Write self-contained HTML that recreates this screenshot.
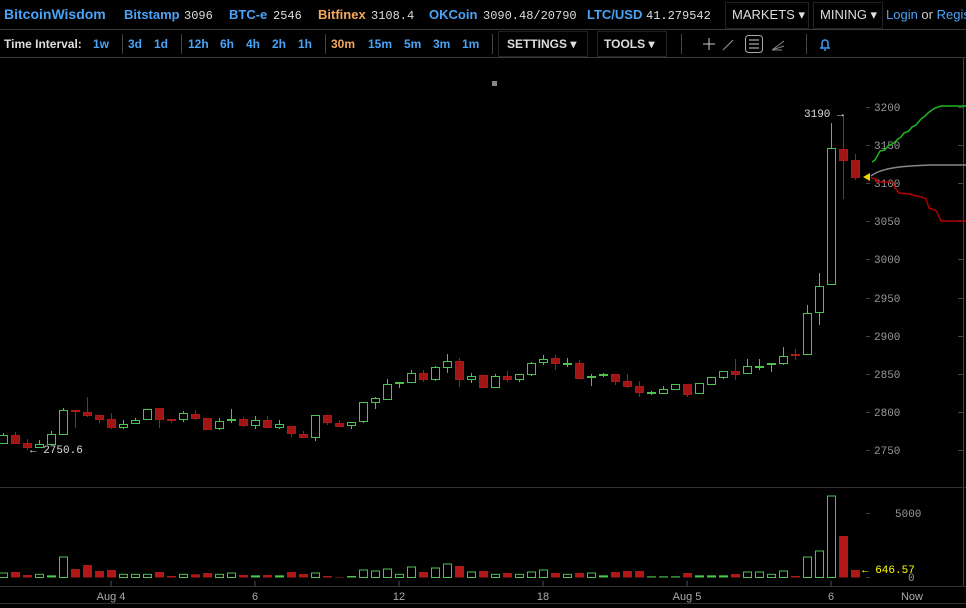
<!DOCTYPE html>
<html><head><meta charset="utf-8"><style>
*{margin:0;padding:0;box-sizing:border-box}
body{width:966px;height:608px;background:#000;overflow:hidden;position:relative;font-family:"Liberation Sans",Arial,sans-serif}
.t{position:absolute;white-space:nowrap;font-size:13px;line-height:16px}
.b{color:#4aa3f5}
.m{font-family:"Liberation Mono",monospace;color:#ddd;font-size:12px}
.w{color:#ddd}
.bd{font-weight:bold}
.o{color:#f5a85a}
.sep{position:absolute;width:1px;height:20px;background:#444;top:34px}
.box{position:absolute;border:1px solid #222;top:2px;height:27px}
</style></head><body>
<div style="position:absolute;left:0;top:29px;width:966px;height:1px;background:#3a3a3a"></div>
<div style="position:absolute;left:0;top:57px;width:966px;height:1px;background:#3a3a3a"></div>
<div class="box" style="left:725px;width:84px"></div>
<div class="box" style="left:813px;width:70px"></div>
<div class="t b bd" style="left:4px;top:6px;font-size:14px">BitcoinWisdom</div>
<div class="t b bd" style="left:124px;top:7px">Bitstamp</div><div class="t m" style="left:184px;top:8px">3096</div>
<div class="t b bd" style="left:229px;top:7px">BTC-e</div><div class="t m" style="left:273px;top:8px">2546</div>
<div class="t o bd" style="left:318px;top:7px">Bitfinex</div><div class="t m" style="left:371px;top:8px">3108.4</div>
<div class="t b bd" style="left:429px;top:7px">OKCoin</div><div class="t m" style="left:483px;top:8px">3090.48/20790</div>
<div class="t b bd" style="left:587px;top:7px">LTC/USD</div><div class="t m" style="left:646px;top:8px">41.279542</div>
<div class="t w" style="left:732px;top:7px">MARKETS ▾</div>
<div class="t w" style="left:820px;top:7px">MINING ▾</div>
<div class="t b" style="left:886px;top:7px">Login <span style="color:#ccc">or</span> Register</div>

<div class="t w bd" style="left:4px;top:36px;font-size:12px">Time Interval:</div>
<div class="t b bd" style="left:93px;top:36px;font-size:12px">1w</div>
<div class="sep" style="left:122px"></div>
<div class="t b bd" style="left:128px;top:36px;font-size:12px">3d</div>
<div class="t b bd" style="left:154px;top:36px;font-size:12px">1d</div>
<div class="sep" style="left:181px"></div>
<div class="t b bd" style="left:188px;top:36px;font-size:12px">12h</div>
<div class="t b bd" style="left:220px;top:36px;font-size:12px">6h</div>
<div class="t b bd" style="left:246px;top:36px;font-size:12px">4h</div>
<div class="t b bd" style="left:272px;top:36px;font-size:12px">2h</div>
<div class="t b bd" style="left:298px;top:36px;font-size:12px">1h</div>
<div class="sep" style="left:325px"></div>
<div class="t o bd" style="left:331px;top:36px;font-size:12px">30m</div>
<div class="t b bd" style="left:368px;top:36px;font-size:12px">15m</div>
<div class="t b bd" style="left:404px;top:36px;font-size:12px">5m</div>
<div class="t b bd" style="left:433px;top:36px;font-size:12px">3m</div>
<div class="t b bd" style="left:462px;top:36px;font-size:12px">1m</div>
<div class="sep" style="left:492px"></div>
<div class="box" style="left:498px;top:31px;width:90px;height:26px"></div>
<div class="box" style="left:597px;top:31px;width:70px;height:26px"></div>
<div class="t w bd" style="left:507px;top:36px;font-size:12px">SETTINGS ▾</div>
<div class="t w bd" style="left:604px;top:36px;font-size:12px">TOOLS ▾</div>
<div class="sep" style="left:681px"></div>
<div class="sep" style="left:806px"></div>
<svg style="position:absolute;left:0;top:0" width="966" height="608">
<g stroke="#ccc" stroke-width="1" fill="none">
<path d="M703 44h12M709 38v12"/>
<path d="M723 50l10-10" stroke="#999"/>
<rect x="745.5" y="35.5" width="17" height="17" rx="3" stroke="#aaa"/>
<path d="M749 40h10M749 44h10M749 48h10"/>
<path d="M772 50l12-9M772 50l12-4M772 50l10 0" stroke="#888"/>
</g>
<path d="M820 48h10M822 48v-5a3 3 0 0 1 6 0v5M824 50h2" stroke="#3d9bff" stroke-width="1.5" fill="none"/>
<rect x="492" y="81" width="5" height="5" fill="#888"/>
<line x1="963.5" y1="58" x2="963.5" y2="586" stroke="#444"/>
<line x1="0" y1="487.5" x2="966" y2="487.5" stroke="#333"/>
<line x1="0" y1="586.5" x2="966" y2="586.5" stroke="#333"/>
<line x1="0" y1="603.5" x2="966" y2="603.5" stroke="#333"/>
<g id="ax" font-family="Liberation Mono,monospace" font-size="11" fill="#999"></g>
<g id="cd"></g>
<path d="M872 162L875 160L880 151L885 150L888 146L892 144L895 142L898 139L901 137L904 133L909 131L912 127L916 125L921 119L925 116L928 113L932 110L935 108L941 106H966" stroke="#1db81d" stroke-width="1.5" fill="none"/>
<path d="M871 176c10-8 30-10 60-11h35" stroke="#888" stroke-width="1.5" fill="none"/>
<path d="M871 178L876 179L877 182L893 182L895 188L899 193L910 194L912 195L922 197L926 199L929 208L935 210L937 212L939 217L941 221H966" stroke="#b00000" stroke-width="1.5" fill="none"/>
<path d="M863 177l7-4v8z" fill="#e5d800"/>
<text x="804" y="117" font-family="Liberation Mono,monospace" font-size="11" fill="#ddd">3190 →</text>
<text x="30" y="453" font-family="Liberation Mono,monospace" font-size="11" fill="#ddd">← 2750.6</text>
<text x="862" y="573" font-family="Liberation Mono,monospace" font-size="11" fill="#ff0">← 646.57</text>
<g font-family="Liberation Sans,sans-serif" font-size="11" fill="#aaa" text-anchor="middle">
<text x="111" y="600">Aug 4</text><text x="255" y="600">6</text><text x="399" y="600">12</text><text x="543" y="600">18</text><text x="687" y="600">Aug 5</text><text x="831" y="600">6</text><text x="912" y="600">Now</text>
</g>
<g stroke="#555"><path d="M111 581v5M255 581v5M399 581v5M543 581v5M687 581v5M831 581v5"/></g>
</svg>
<script>
var NS="http://www.w3.org/2000/svg";
function el(p,n,a){var e=document.createElementNS(NS,n);for(var k in a)e.setAttribute(k,a[k]);p.appendChild(e);return e;}
var ax=document.getElementById('ax');
var labs=[[3200,107],[3150,145],[3100,183],[3050,221],[3000,259],[2950,298],[2900,336],[2850,374],[2800,412],[2750,450]];
labs.forEach(function(l){var t=el(ax,'text',{x:874,y:l[1]+4});t.textContent=l[0];el(ax,'line',{x1:866,x2:870,y1:l[1]+.5,y2:l[1]+.5,stroke:'#444'});el(ax,'line',{x1:958,x2:963,y1:l[1]+.5,y2:l[1]+.5,stroke:'#444'});});
var t=el(ax,'text',{x:895,y:517});t.textContent='5000';t=el(ax,'text',{x:908,y:581});t.textContent='0';
el(ax,'line',{x1:866,x2:870,y1:513.5,y2:513.5,stroke:'#444'});el(ax,'line',{x1:866,x2:870,y1:577.5,y2:577.5,stroke:'#444'});
var C=[['g',435,443,433,444],['r',435,443,432,444],['r',443,447,439,450],['g',444,447,440,448],['g',434,444,431,445],['g',410,434,408,435],['r',410,412,410,428],['r',412,415,397,417],['r',415,419,415,423],['r',419,427,413,429],['g',424,427,420,429],['g',420,423,418,423],['g',409,419,409,419],['r',408,419,408,428],['r',419,420,419,423],['g',413,419,411,422],['r',414,418,410,420],['r',418,429,418,429],['g',421,428,418,430],['g',419,421,409,423],['r',419,425,417,427],['g',420,425,416,429],['r',420,427,416,427],['g',424,427,420,429],['r',426,433,426,437],['r',434,437,431,437],['g',415,437,415,441],['r',415,422,415,425],['r',423,426,420,427],['g',422,425,422,429],['g',402,421,402,423],['g',398,402,397,409],['g',384,399,379,399],['g',382,384,382,388],['g',373,382,370,383],['r',373,379,370,382],['g',367,379,366,381],['g',361,367,354,373],['r',361,379,358,387],['g',376,379,373,383],['r',375,387,375,388],['g',376,387,374,387],['r',376,379,371,382],['g',374,379,374,382],['g',363,374,362,376],['g',359,362,355,365],['r',358,363,355,370],['g',363,365,358,367],['r',363,378,360,378],['g',376,377,374,386],['g',374,375,373,377],['r',374,381,374,385],['r',381,386,374,388],['r',386,392,381,397],['g',392,393,391,395],['g',389,393,386,393],['g',384,389,384,390],['r',384,394,384,397],['g',383,393,383,394],['g',377,384,377,385],['g',371,377,371,379],['r',371,374,359,380],['g',366,373,359,373],['g',366,367,359,370],['g',363,364,363,372],['g',356,363,347,365],['r',354,355,349,360],['g',313,354,305,355],['g',286,312,273,325],['g',148,284,123,285],['r',149,160,114,199],['r',160,177,154,180]];
var cd=document.getElementById('cd');
C.forEach(function(c,i){var x=3+12*i,col=c[0]=='g'?'#4cc34c':'#b01818',fill=c[0]=='g'?'none':'#a01414';
el(cd,'line',{x1:x+.5,x2:x+.5,y1:c[3],y2:c[4],stroke:col});
var h=c[2]-c[1];
if(h<=2)el(cd,'rect',{x:x-4,y:c[1],width:9,height:2,fill:col});
else el(cd,'rect',{x:x-3.5,y:c[1]+.5,width:8,height:h,fill:c[0]=='g'?'#000':fill,stroke:col});});
var V=['g279','r276','r285','g283','g286','g231','r267','r255','r273','r270','g283','g283','g283','r276','r288','g283','r283','r279','g283','g279','r285','g286','r285','g286','r276','r282','g279','r288','r291','g288','g270','g273','g267','g283','g261','r276','g264','g252','r258','g276','r273','g283','r279','g283','g276','g270','r279','g283','r279','g279','g286','r276','r273','r273','g289','g289','g289','r279','g286','g286','g286','r282','g276','g276','g283','g273','r288','g231','g213','g48','r168','r270'];
V.forEach(function(v,i){var x=3+12*i,top=480+(+v.slice(1))/3,b=577.5,h=b-top,g=v[0]=='g';
if(g&&h<3)el(cd,'rect',{x:x-4,y:top,width:9,height:h,fill:'#4cc34c'});
else if(g)el(cd,'rect',{x:x-3.5,y:top,width:8,height:h,fill:'none',stroke:'#4cc34c'});
else el(cd,'rect',{x:x-4,y:top,width:9,height:h,fill:'#b01818'});});
</script>
</body></html>
